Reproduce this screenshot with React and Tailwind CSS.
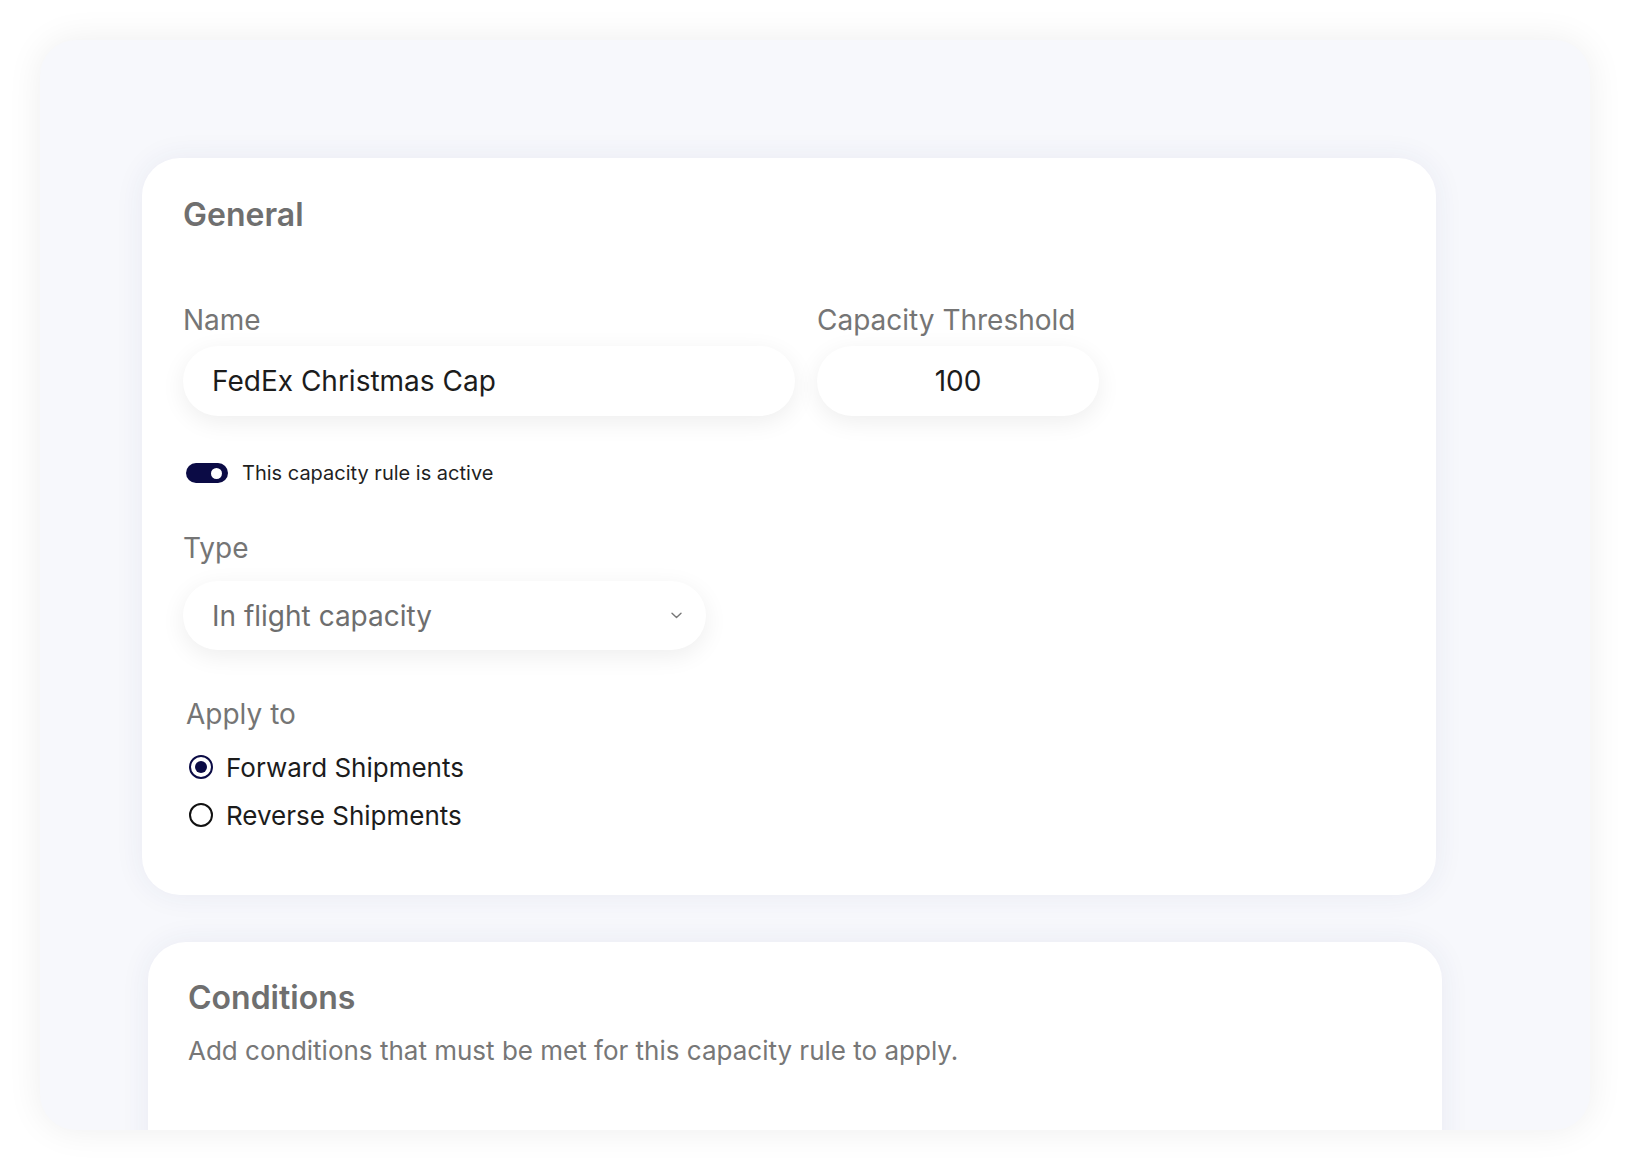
import React from "react";

export default function App() {
  const font = { fontFamily: "Inter, 'Noto Sans', sans-serif" };
  return (
    <div className="min-h-[1170px] w-[1630px] bg-white pt-[40px] pl-[40px]" style={font}>
      <div className="w-[1550px] h-[1090px] rounded-[36px] bg-[#f7f8fc] shadow-[0_0_36px_rgba(0,0,0,0.07)] overflow-hidden pt-[118px] pl-[102px]">
        {/* General card */}
        <div className="w-[1294px] h-[737px] rounded-[38px] bg-white shadow-[0_0_30px_rgba(40,50,110,0.07)] pt-[37px] pl-[41px]">
          <h2 className="h-[40px] leading-[40px] text-[32px] font-semibold text-[#6f6f6f]">General</h2>

          <div className="mt-[68px] flex gap-[22px]">
            <div className="flex flex-col">
              <label className="h-[34px] leading-[34px] text-[28px] text-[#757575]">Name</label>
              <div className="mt-[9px] w-[612px] h-[70px] rounded-full bg-white shadow-[0_6px_24px_rgba(0,0,0,0.07)] flex items-center pl-[29px] text-[28px] text-[#1c1c1c]">
                FedEx Christmas Cap
              </div>
            </div>
            <div className="flex flex-col">
              <label className="h-[34px] leading-[34px] text-[28px] text-[#757575]">Capacity Threshold</label>
              <div className="mt-[9px] w-[282px] h-[70px] rounded-full bg-white shadow-[0_6px_24px_rgba(0,0,0,0.07)] flex items-center justify-center text-[28px] text-[#1c1c1c]">
                100
              </div>
            </div>
          </div>

          <div className="mt-[47px] ml-[3px] flex items-center h-[20px] gap-[14px]">
            <div className="w-[42px] h-[20px] rounded-full bg-[#0b0b45] flex items-center justify-end pr-[6px]">
              <div className="w-[11px] h-[11px] rounded-full bg-white" />
            </div>
            <span className="text-[20px] leading-[20px] text-[#1f1f1f]">This capacity rule is active</span>
          </div>

          <label className="block mt-[48px] h-[34px] leading-[34px] text-[28px] text-[#757575]">Type</label>
          <div className="mt-[16px] w-[523px] h-[69px] rounded-full bg-white shadow-[0_6px_24px_rgba(0,0,0,0.07)] flex items-center justify-between pl-[29px] pr-[24px] text-[28px] text-[#6e6e6e]">
            <span>In flight capacity</span>
            <svg width="11" height="7" viewBox="0 0 11 7" fill="none">
              <path d="M1 1.2L5.5 5.5L10 1.2" stroke="#777" strokeWidth="1.4" strokeLinecap="round" strokeLinejoin="round" />
            </svg>
          </div>

          <label className="block mt-[47px] ml-[3px] h-[34px] leading-[34px] text-[28px] text-[#757575]">Apply to</label>
          <div className="mt-[16px] ml-[6px] flex flex-col gap-[8px]">
            <div className="flex items-center h-[40px] gap-[13px]">
              <div className="w-[24px] h-[24px] rounded-full border-[2.5px] border-[#0b0b45] flex items-center justify-center">
                <div className="w-[12px] h-[12px] rounded-full bg-[#0b0b45]" />
              </div>
              <span className="text-[26px] text-[#1c1c1c]">Forward Shipments</span>
            </div>
            <div className="flex items-center h-[40px] gap-[13px]">
              <div className="w-[24px] h-[24px] rounded-full border-[2.5px] border-[#111]" />
              <span className="text-[26px] text-[#1c1c1c]">Reverse Shipments</span>
            </div>
          </div>
        </div>

        {/* Conditions card */}
        <div className="mt-[47px] ml-[6px] w-[1294px] h-[400px] rounded-[38px] bg-white shadow-[0_0_30px_rgba(40,50,110,0.07)] pt-[36px] pl-[40px]">
          <h2 className="h-[40px] leading-[40px] text-[32px] font-semibold text-[#6f6f6f]">Conditions</h2>
          <p className="mt-[16px] h-[34px] leading-[34px] text-[26px] text-[#777]">
            Add conditions that must be met for this capacity rule to apply.
          </p>
        </div>
      </div>
    </div>
  );
}
